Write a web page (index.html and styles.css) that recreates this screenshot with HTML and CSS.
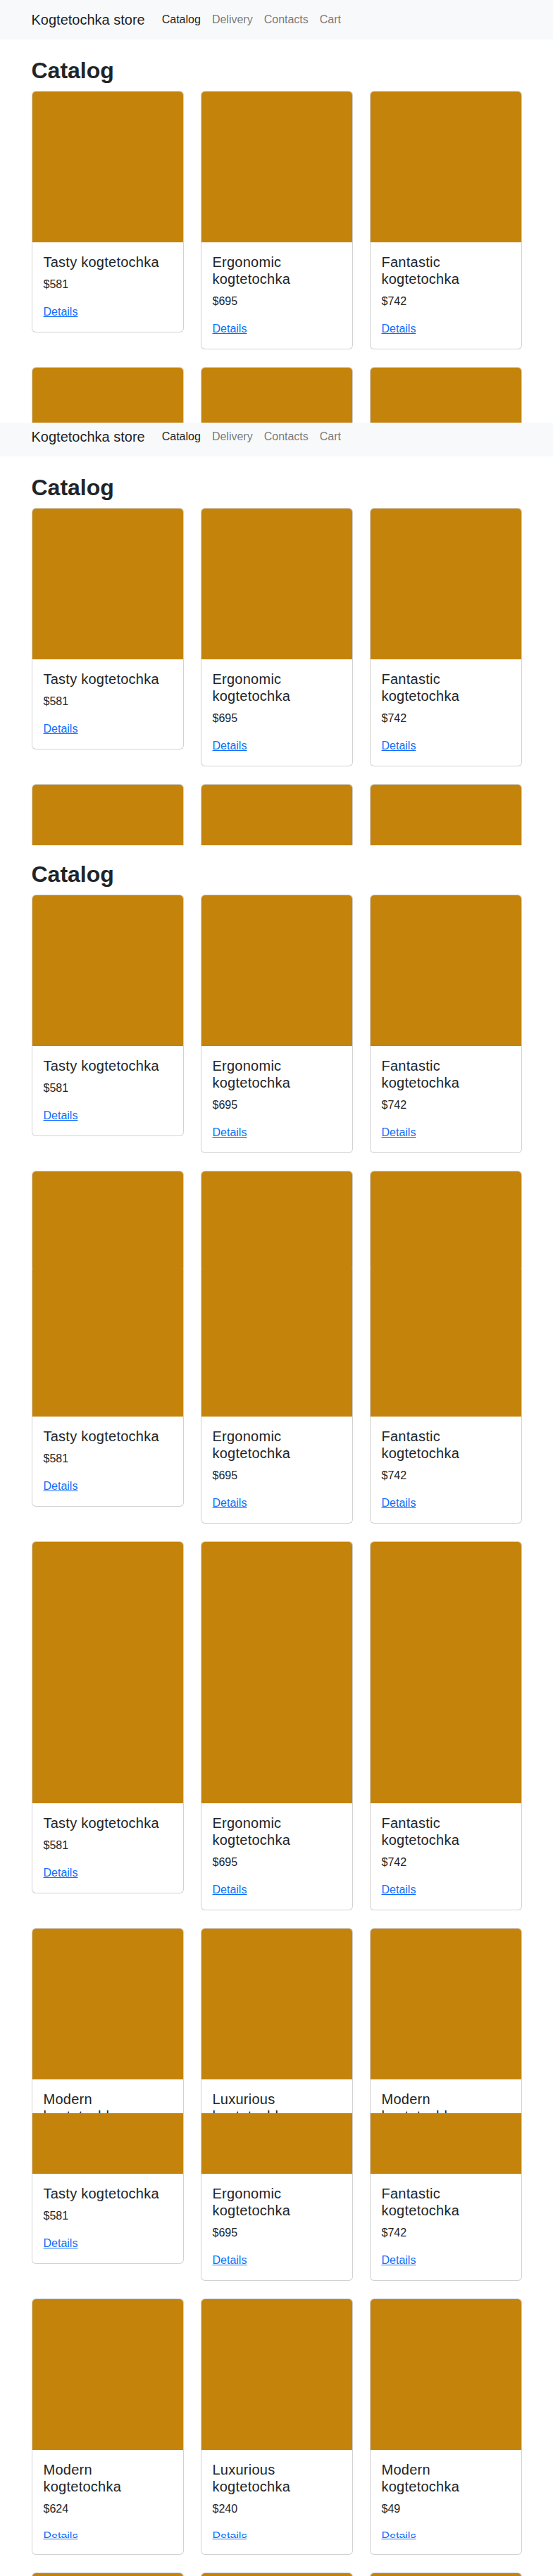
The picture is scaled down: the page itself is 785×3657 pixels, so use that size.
FILE: index.html
```html
<!DOCTYPE html>
<html lang="en">
<head>
<meta charset="utf-8">
<title>Kogtetochka store</title>
<link rel="stylesheet" href="styles.css">
</head>
<body>

<div class="slice slice-a"><div class="page">
  <nav class="navbar"><div class="container nav-inner"><a class="brand" href="#">Kogtetochka store</a><a class="nav-link active" href="#">Catalog</a><a class="nav-link" href="#">Delivery</a><a class="nav-link" href="#">Contacts</a><a class="nav-link" href="#">Cart</a></div></nav>
  <main class="container main">
    <h1 class="heading">Catalog</h1>
    <div class="grid">
      <div class="card"><div class="card-img"></div><div class="card-body"><h5 class="card-title">Tasty kogtetochka</h5><p class="price">$581</p><a class="details" href="#">Details</a></div></div>
      <div class="card"><div class="card-img"></div><div class="card-body"><h5 class="card-title">Ergonomic kogtetochka</h5><p class="price">$695</p><a class="details" href="#">Details</a></div></div>
      <div class="card"><div class="card-img"></div><div class="card-body"><h5 class="card-title">Fantastic kogtetochka</h5><p class="price">$742</p><a class="details" href="#">Details</a></div></div>
      <div class="card"><div class="card-img"></div><div class="card-body"><h5 class="card-title">Modern kogtetochka</h5><p class="price">$624</p><a class="details" href="#">Details</a></div></div>
      <div class="card"><div class="card-img"></div><div class="card-body"><h5 class="card-title">Luxurious kogtetochka</h5><p class="price">$240</p><a class="details" href="#">Details</a></div></div>
      <div class="card"><div class="card-img"></div><div class="card-body"><h5 class="card-title">Modern kogtetochka</h5><p class="price">$49</p><a class="details" href="#">Details</a></div></div>
    </div>
  </main>
</div></div>

<div class="slice slice-b"><div class="page">
  <nav class="navbar"><div class="container nav-inner"><a class="brand" href="#">Kogtetochka store</a><a class="nav-link active" href="#">Catalog</a><a class="nav-link" href="#">Delivery</a><a class="nav-link" href="#">Contacts</a><a class="nav-link" href="#">Cart</a></div></nav>
  <main class="container main">
    <h1 class="heading">Catalog</h1>
    <div class="grid">
      <div class="card"><div class="card-img"></div><div class="card-body"><h5 class="card-title">Tasty kogtetochka</h5><p class="price">$581</p><a class="details" href="#">Details</a></div></div>
      <div class="card"><div class="card-img"></div><div class="card-body"><h5 class="card-title">Ergonomic kogtetochka</h5><p class="price">$695</p><a class="details" href="#">Details</a></div></div>
      <div class="card"><div class="card-img"></div><div class="card-body"><h5 class="card-title">Fantastic kogtetochka</h5><p class="price">$742</p><a class="details" href="#">Details</a></div></div>
      <div class="card"><div class="card-img"></div><div class="card-body"><h5 class="card-title">Modern kogtetochka</h5><p class="price">$624</p><a class="details" href="#">Details</a></div></div>
      <div class="card"><div class="card-img"></div><div class="card-body"><h5 class="card-title">Luxurious kogtetochka</h5><p class="price">$240</p><a class="details" href="#">Details</a></div></div>
      <div class="card"><div class="card-img"></div><div class="card-body"><h5 class="card-title">Modern kogtetochka</h5><p class="price">$49</p><a class="details" href="#">Details</a></div></div>
    </div>
  </main>
</div></div>

<div class="slice slice-c"><div class="page">
  <nav class="navbar"><div class="container nav-inner"><a class="brand" href="#">Kogtetochka store</a><a class="nav-link active" href="#">Catalog</a><a class="nav-link" href="#">Delivery</a><a class="nav-link" href="#">Contacts</a><a class="nav-link" href="#">Cart</a></div></nav>
  <main class="container main">
    <h1 class="heading">Catalog</h1>
    <div class="grid">
      <div class="card"><div class="card-img"></div><div class="card-body"><h5 class="card-title">Tasty kogtetochka</h5><p class="price">$581</p><a class="details" href="#">Details</a></div></div>
      <div class="card"><div class="card-img"></div><div class="card-body"><h5 class="card-title">Ergonomic kogtetochka</h5><p class="price">$695</p><a class="details" href="#">Details</a></div></div>
      <div class="card"><div class="card-img"></div><div class="card-body"><h5 class="card-title">Fantastic kogtetochka</h5><p class="price">$742</p><a class="details" href="#">Details</a></div></div>
      <div class="card"><div class="card-img"></div><div class="card-body"><h5 class="card-title">Modern kogtetochka</h5><p class="price">$624</p><a class="details" href="#">Details</a></div></div>
      <div class="card"><div class="card-img"></div><div class="card-body"><h5 class="card-title">Luxurious kogtetochka</h5><p class="price">$240</p><a class="details" href="#">Details</a></div></div>
      <div class="card"><div class="card-img"></div><div class="card-body"><h5 class="card-title">Modern kogtetochka</h5><p class="price">$49</p><a class="details" href="#">Details</a></div></div>
    </div>
  </main>
</div></div>

<div class="slice slice-d"><div class="page">
  <nav class="navbar"><div class="container nav-inner"><a class="brand" href="#">Kogtetochka store</a><a class="nav-link active" href="#">Catalog</a><a class="nav-link" href="#">Delivery</a><a class="nav-link" href="#">Contacts</a><a class="nav-link" href="#">Cart</a></div></nav>
  <main class="container main">
    <h1 class="heading">Catalog</h1>
    <div class="grid">
      <div class="card"><div class="card-img"></div><div class="card-body"><h5 class="card-title">Tasty kogtetochka</h5><p class="price">$581</p><a class="details" href="#">Details</a></div></div>
      <div class="card"><div class="card-img"></div><div class="card-body"><h5 class="card-title">Ergonomic kogtetochka</h5><p class="price">$695</p><a class="details" href="#">Details</a></div></div>
      <div class="card"><div class="card-img"></div><div class="card-body"><h5 class="card-title">Fantastic kogtetochka</h5><p class="price">$742</p><a class="details" href="#">Details</a></div></div>
      <div class="card"><div class="card-img"></div><div class="card-body"><h5 class="card-title">Modern kogtetochka</h5><p class="price">$624</p><a class="details" href="#">Details</a></div></div>
      <div class="card"><div class="card-img"></div><div class="card-body"><h5 class="card-title">Luxurious kogtetochka</h5><p class="price">$240</p><a class="details" href="#">Details</a></div></div>
      <div class="card"><div class="card-img"></div><div class="card-body"><h5 class="card-title">Modern kogtetochka</h5><p class="price">$49</p><a class="details" href="#">Details</a></div></div>
    </div>
  </main>
</div></div>

<div class="slice slice-e"><div class="page">
  <nav class="navbar"><div class="container nav-inner"><a class="brand" href="#">Kogtetochka store</a><a class="nav-link active" href="#">Catalog</a><a class="nav-link" href="#">Delivery</a><a class="nav-link" href="#">Contacts</a><a class="nav-link" href="#">Cart</a></div></nav>
  <main class="container main">
    <h1 class="heading">Catalog</h1>
    <div class="grid">
      <div class="card"><div class="card-img"></div><div class="card-body"><h5 class="card-title">Tasty kogtetochka</h5><p class="price">$581</p><a class="details" href="#">Details</a></div></div>
      <div class="card"><div class="card-img"></div><div class="card-body"><h5 class="card-title">Ergonomic kogtetochka</h5><p class="price">$695</p><a class="details" href="#">Details</a></div></div>
      <div class="card"><div class="card-img"></div><div class="card-body"><h5 class="card-title">Fantastic kogtetochka</h5><p class="price">$742</p><a class="details" href="#">Details</a></div></div>
      <div class="card"><div class="card-img"></div><div class="card-body"><h5 class="card-title">Modern kogtetochka</h5><p class="price">$624</p><a class="details" href="#">Details</a></div></div>
      <div class="card"><div class="card-img"></div><div class="card-body"><h5 class="card-title">Luxurious kogtetochka</h5><p class="price">$240</p><a class="details" href="#">Details</a></div></div>
      <div class="card"><div class="card-img"></div><div class="card-body"><h5 class="card-title">Modern kogtetochka</h5><p class="price">$49</p><a class="details" href="#">Details</a></div></div>
    </div>
  </main>
</div></div>

<div class="slice slice-f"><div class="page">
  <nav class="navbar"><div class="container nav-inner"><a class="brand" href="#">Kogtetochka store</a><a class="nav-link active" href="#">Catalog</a><a class="nav-link" href="#">Delivery</a><a class="nav-link" href="#">Contacts</a><a class="nav-link" href="#">Cart</a></div></nav>
  <main class="container main">
    <h1 class="heading">Catalog</h1>
    <div class="grid">
      <div class="card"><div class="card-img"></div><div class="card-body"><h5 class="card-title">Tasty kogtetochka</h5><p class="price">$581</p><a class="details" href="#">Details</a></div></div>
      <div class="card"><div class="card-img"></div><div class="card-body"><h5 class="card-title">Ergonomic kogtetochka</h5><p class="price">$695</p><a class="details" href="#">Details</a></div></div>
      <div class="card"><div class="card-img"></div><div class="card-body"><h5 class="card-title">Fantastic kogtetochka</h5><p class="price">$742</p><a class="details" href="#">Details</a></div></div>
      <div class="card"><div class="card-img"></div><div class="card-body"><h5 class="card-title">Modern kogtetochka</h5><p class="price">$624</p><a class="details" href="#">Details</a></div></div>
      <div class="card"><div class="card-img"></div><div class="card-body"><h5 class="card-title">Luxurious kogtetochka</h5><p class="price">$240</p><a class="details" href="#">Details</a></div></div>
      <div class="card"><div class="card-img"></div><div class="card-body"><h5 class="card-title">Modern kogtetochka</h5><p class="price">$49</p><a class="details" href="#">Details</a></div></div>
    </div>
  </main>
</div></div>

<div class="slice slice-g"><div class="page">
  <nav class="navbar"><div class="container nav-inner"><a class="brand" href="#">Kogtetochka store</a><a class="nav-link active" href="#">Catalog</a><a class="nav-link" href="#">Delivery</a><a class="nav-link" href="#">Contacts</a><a class="nav-link" href="#">Cart</a></div></nav>
  <main class="container main">
    <h1 class="heading">Catalog</h1>
    <div class="grid">
      <div class="card"><div class="card-img"></div><div class="card-body"><h5 class="card-title">Tasty kogtetochka</h5><p class="price">$581</p><a class="details" href="#">Details</a></div></div>
      <div class="card"><div class="card-img"></div><div class="card-body"><h5 class="card-title">Ergonomic kogtetochka</h5><p class="price">$695</p><a class="details" href="#">Details</a></div></div>
      <div class="card"><div class="card-img"></div><div class="card-body"><h5 class="card-title">Fantastic kogtetochka</h5><p class="price">$742</p><a class="details" href="#">Details</a></div></div>
      <div class="card"><div class="card-img"></div><div class="card-body"><h5 class="card-title">Modern kogtetochka</h5><p class="price">$624</p><a class="details" href="#">Details</a></div></div>
      <div class="card"><div class="card-img"></div><div class="card-body"><h5 class="card-title">Luxurious kogtetochka</h5><p class="price">$240</p><a class="details" href="#">Details</a></div></div>
      <div class="card"><div class="card-img"></div><div class="card-body"><h5 class="card-title">Modern kogtetochka</h5><p class="price">$49</p><a class="details" href="#">Details</a></div></div>
      <div class="card"><div class="card-img"></div><div class="card-body"><h5 class="card-title">Small kogtetochka</h5><p class="price">$312</p><a class="details" href="#">Details</a></div></div>
      <div class="card"><div class="card-img"></div><div class="card-body"><h5 class="card-title">Rustic kogtetochka</h5><p class="price">$158</p><a class="details" href="#">Details</a></div></div>
      <div class="card"><div class="card-img"></div><div class="card-body"><h5 class="card-title">Sleek kogtetochka</h5><p class="price">$477</p><a class="details" href="#">Details</a></div></div>
    </div>
  </main>
</div></div>

</body>
</html>
```

FILE: styles.css
```css
* {
  box-sizing: border-box;
}

html,
body {
  margin: 0;
  padding: 0;
  background: #ffffff;
}

body {
  width: 785px;
  font-family: "Liberation Sans", Arial, sans-serif;
  font-size: 16px;
  line-height: 1.5;
  color: #212529;
}

/* each slice is one captured viewport of the same page */
.slice {
  height: 600px;
  overflow: hidden;
  background: #ffffff;
}

.slice-g {
  height: 57px;
}

.slice-b .page { margin-top: -8px; }
.slice-c .page { margin-top: -59px; }
.slice-d .page { margin-top: -133px; }
.slice-e .page { margin-top: -184px; }
.slice-f .page { margin-top: -258px; }
.slice-g .page { margin-top: -861px; }

.container {
  width: 720px;
  margin: 0 auto;
  padding: 0 12px;
}

/* navbar */
.navbar {
  height: 56px;
  background: #f8f9fa;
  padding: 8px 0;
}

.nav-inner {
  display: flex;
  align-items: center;
  height: 40px;
}

.brand {
  font-size: 20px;
  line-height: 30px;
  padding: 5px 0;
  margin-right: 16px;
  color: rgba(0, 0, 0, 0.9);
  text-decoration: none;
}

.nav-link {
  font-size: 16px;
  line-height: 24px;
  padding: 8px;
  color: rgba(0, 0, 0, 0.55);
  text-decoration: none;
}

.nav-link.active {
  color: rgba(0, 0, 0, 0.9);
}

/* content */
.main {
  padding-top: 24px;
  padding-bottom: 40px;
}

.heading {
  margin: 0 0 9px;
  font-size: 32px;
  line-height: 40px;
  font-weight: 700;
  color: #212529;
}

.grid {
  display: grid;
  grid-template-columns: repeat(3, 216px);
  column-gap: 24px;
  row-gap: 25px;
  align-items: start;
}

.card {
  background: #ffffff;
  border: 1px solid rgba(0, 0, 0, 0.175);
  border-radius: 6px;
  overflow: hidden;
}

.card-img {
  height: 214px;
  background: #c4840c;
}

.card-body {
  padding: 16px 16px 16px;
}

.card-title {
  margin: 0 0 8px;
  font-size: 20px;
  line-height: 24px;
  font-weight: 500;
  letter-spacing: 0.25px;
  color: #212529;
}

.price {
  margin: 0 0 15px;
  font-size: 16px;
  line-height: 24px;
  color: #212529;
}

.details {
  display: block;
  width: max-content;
  font-size: 16px;
  line-height: 24px;
  color: #0d6efd;
  text-decoration: underline;
}
```
